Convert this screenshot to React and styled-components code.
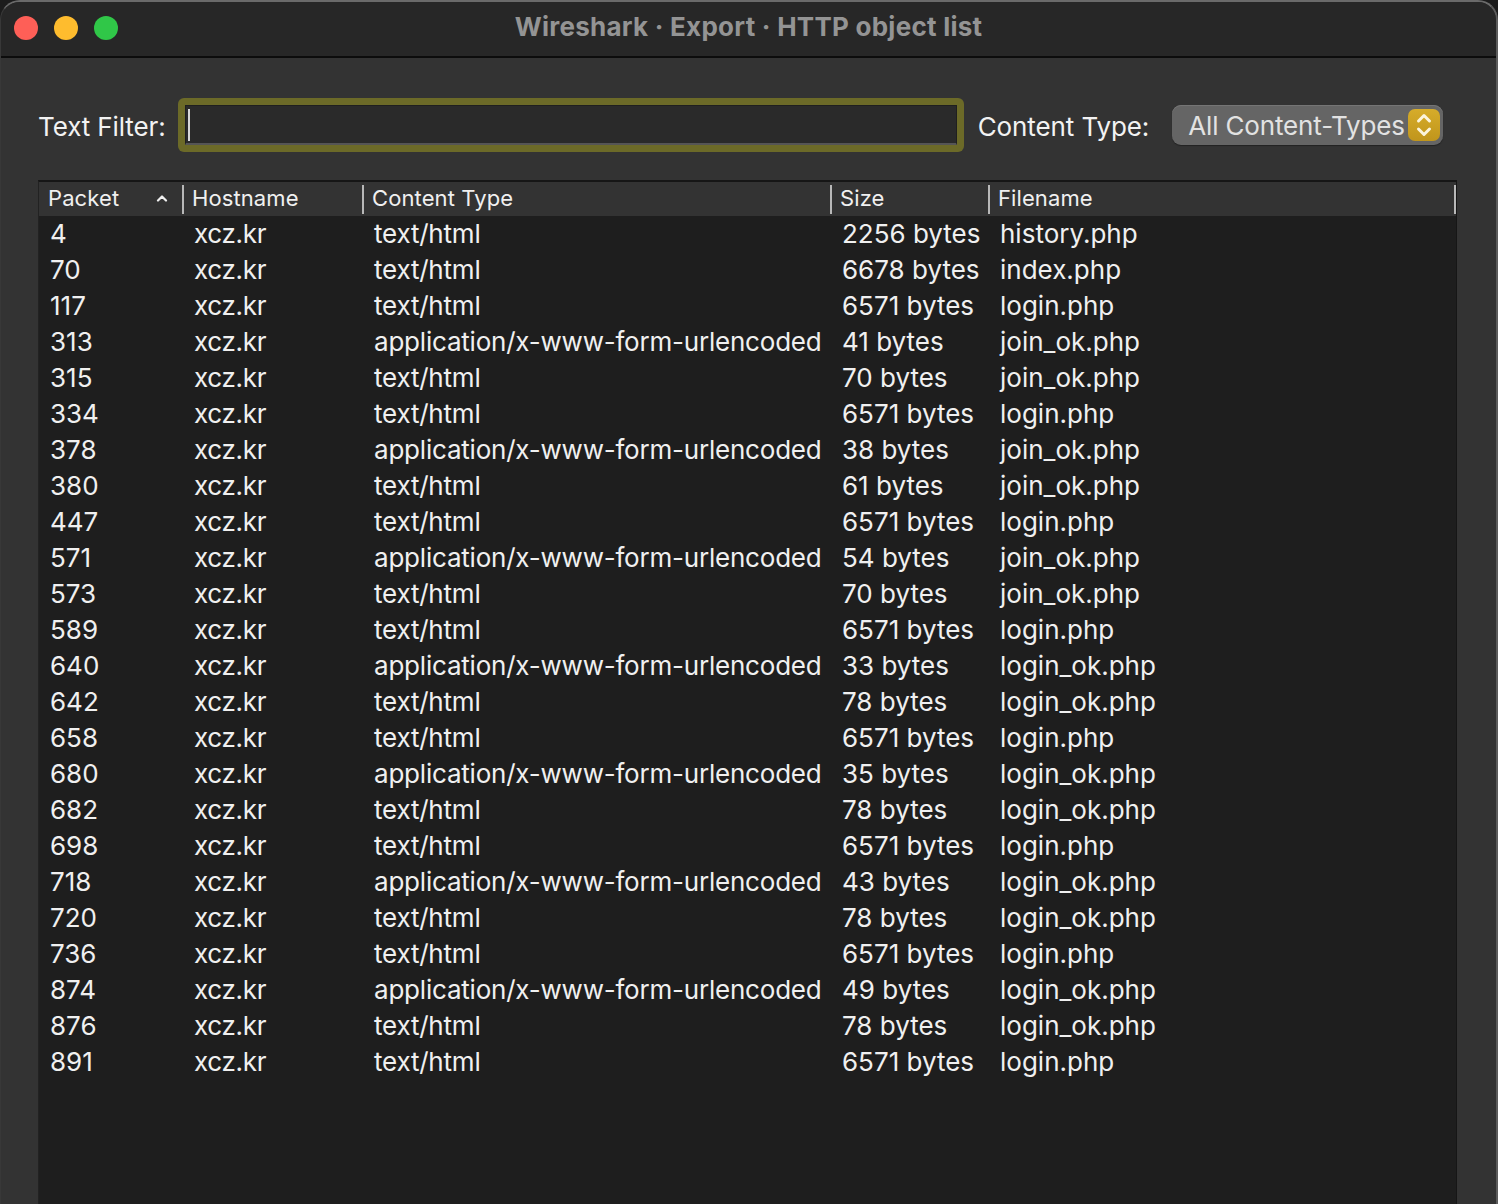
import React from "react";
import styled, { createGlobalStyle } from "styled-components";

const GlobalStyle = createGlobalStyle`
  html, body {
    margin: 0;
    padding: 0;
    height: 1204px;
    overflow: hidden;
    background: #1c1c1c;
  }
  * { box-sizing: border-box; }
`;

const Window = styled.div`
  width: 1498px;
  height: 1204px;
  display: flex;
  flex-direction: column;
  overflow: hidden;
  background: #333333;
  border-radius: 20px 20px 0 0;
  border-top: 2px solid #6a6a6a;
  border-left: 1px solid #383838;
  border-right: 2px solid #5c5c5c;
  font-family: Inter, "Liberation Sans", sans-serif;
  color: #f0f0f0;
`;

const TitleBar = styled.div`
  position: relative;
  height: 56px;
  flex: none;
  display: flex;
  align-items: center;
  justify-content: center;
  background: #272727;
  border-bottom: 2px solid #0c0c0c;
`;

const Lights = styled.div`
  position: absolute;
  left: 13px;
  top: 14px;
  display: flex;
  gap: 16px;
`;

const Light = styled.span`
  width: 24px;
  height: 24px;
  border-radius: 50%;
  background: ${({ $color }) => $color};
`;

const Title = styled.div`
  font-size: 26px;
  font-weight: 700;
  letter-spacing: 0.25px;
  color: #949494;
  margin-top: -5px;
`;

const Content = styled.div`
  flex: 1;
  min-height: 0;
  display: flex;
  flex-direction: column;
  padding: 40px 39px 0 37px;
`;

const FilterRow = styled.div`
  height: 54px;
  flex: none;
  display: flex;
  align-items: center;
`;

const Label = styled.label`
  padding-top: 2px;
  font-size: 26px;
  letter-spacing: -0.1px;
  color: #f2f2f2;
  white-space: nowrap;
`;

const TextInputFrame = styled.div`
  width: 786px;
  height: 54px;
  margin-left: 12px;
  margin-right: 14px;
  flex: none;
  padding: 7px;
  background: #6c6a28;
  border-radius: 6px;
`;

const TextInput = styled.div`
  height: 100%;
  display: flex;
  align-items: center;
  padding: 2px 2px;
  background: #2a2a2a;
  border: 1px solid #1f1f1f;
  border-bottom: 2px solid #555555;
`;

const Caret = styled.span`
  width: 2px;
  height: 32px;
  background: #d8d8d8;
`;

const Select = styled.div`
  width: 271px;
  height: 40px;
  margin-left: 23px;
  flex: none;
  display: flex;
  align-items: center;
  justify-content: space-between;
  padding: 0 3px 0 16px;
  background: #656565;
  border-radius: 9px;
  box-shadow: 0 1px 1px #222222, inset 0 1px 0 #757575;
  color: #e2e2e2;
  font-size: 26px;
  letter-spacing: -0.15px;
  white-space: nowrap;
`;

const Stepper = styled.span`
  width: 32px;
  height: 32px;
  display: flex;
  align-items: center;
  justify-content: center;
  background: linear-gradient(#d6ac2a, #c0951c);
  border-radius: 7px;
`;

const Table = styled.div`
  flex: 1;
  min-height: 0;
  margin-top: 28px;
  display: flex;
  flex-direction: column;
  background: #1e1e1e;
  border-top: 2px solid #161616;
  border-right: 1px solid #161616;
  border-left: 1px solid #222222;
`;

const HeaderRow = styled.div`
  height: 34px;
  flex: none;
  display: grid;
  grid-template-columns: 145px 180px 468px 158px 1fr;
  background: #333333;
`;

const HeaderCell = styled.div`
  display: flex;
  align-items: center;
  justify-content: space-between;
  margin: 3px 0 5px;
  padding: 0 0 3px 8px;
  font-size: 22px;
  letter-spacing: 0.1px;
  color: #f0f0f0;
  border-right: 2px solid #b8b8b8;

  &:first-child {
    padding-left: 9px;
  }
`;

const SortMark = styled.svg`
  width: 12px;
  height: 8px;
  margin-right: 14px;
`;

const Rows = styled.div`
  flex: 1;
  overflow: hidden;
`;

const Row = styled.div`
  height: 36px;
  padding-bottom: 2px;
  display: grid;
  grid-template-columns: 145px 180px 468px 158px 1fr;
  align-items: center;
  font-size: 26px;
  color: #f0f0f0;
`;

const Cell = styled.div`
  padding-left: 10px;
  letter-spacing: ${({ $spacing }) => $spacing || 0}px;
  white-space: nowrap;

  &:first-child {
    padding-left: 11px;
  }
`;

const FORM = "application/x-www-form-urlencoded";
const HTML = "text/html";

const objects = [
  ["4", HTML, "2256 bytes", "history.php"],
  ["70", HTML, "6678 bytes", "index.php"],
  ["117", HTML, "6571 bytes", "login.php"],
  ["313", FORM, "41 bytes", "join_ok.php"],
  ["315", HTML, "70 bytes", "join_ok.php"],
  ["334", HTML, "6571 bytes", "login.php"],
  ["378", FORM, "38 bytes", "join_ok.php"],
  ["380", HTML, "61 bytes", "join_ok.php"],
  ["447", HTML, "6571 bytes", "login.php"],
  ["571", FORM, "54 bytes", "join_ok.php"],
  ["573", HTML, "70 bytes", "join_ok.php"],
  ["589", HTML, "6571 bytes", "login.php"],
  ["640", FORM, "33 bytes", "login_ok.php"],
  ["642", HTML, "78 bytes", "login_ok.php"],
  ["658", HTML, "6571 bytes", "login.php"],
  ["680", FORM, "35 bytes", "login_ok.php"],
  ["682", HTML, "78 bytes", "login_ok.php"],
  ["698", HTML, "6571 bytes", "login.php"],
  ["718", FORM, "43 bytes", "login_ok.php"],
  ["720", HTML, "78 bytes", "login_ok.php"],
  ["736", HTML, "6571 bytes", "login.php"],
  ["874", FORM, "49 bytes", "login_ok.php"],
  ["876", HTML, "78 bytes", "login_ok.php"],
  ["891", HTML, "6571 bytes", "login.php"],
];

const App = () => (
  <>
    <GlobalStyle />
    <Window>
      <TitleBar>
        <Lights>
          <Light $color="#fe5f57" />
          <Light $color="#febc2e" />
          <Light $color="#30c748" />
        </Lights>
        <Title>Wireshark · Export · HTTP object list</Title>
      </TitleBar>
      <Content>
        <FilterRow>
          <Label>Text Filter:</Label>
          <TextInputFrame>
            <TextInput>
              <Caret />
            </TextInput>
          </TextInputFrame>
          <Label>Content Type:</Label>
          <Select>
            All Content-Types
            <Stepper>
              <svg width="18" height="26" viewBox="0 0 18 26" fill="none" stroke="#fbf4dc" strokeWidth="3" strokeLinecap="round" strokeLinejoin="round">
                <path d="M3.5 9 9 3.5 14.5 9" />
                <path d="M3.5 17 9 22.5 14.5 17" />
              </svg>
            </Stepper>
          </Select>
        </FilterRow>
        <Table>
          <HeaderRow>
            <HeaderCell>
              Packet
              <SortMark viewBox="0 0 12 8" fill="none" stroke="#f0f0f0" strokeWidth="2.2" strokeLinecap="round" strokeLinejoin="round">
                <path d="M2 6.5 6 2.5 10 6.5" />
              </SortMark>
            </HeaderCell>
            <HeaderCell>Hostname</HeaderCell>
            <HeaderCell>Content Type</HeaderCell>
            <HeaderCell>Size</HeaderCell>
            <HeaderCell>Filename</HeaderCell>
          </HeaderRow>
          <Rows>
            {objects.map(([packet, type, size, file]) => (
              <Row key={packet}>
                <Cell>{packet}</Cell>
                <Cell $spacing={-0.3}>xcz.kr</Cell>
                <Cell $spacing={-0.21}>{type}</Cell>
                <Cell>{size}</Cell>
                <Cell>{file}</Cell>
              </Row>
            ))}
          </Rows>
        </Table>
      </Content>
    </Window>
  </>
);

export default App;
